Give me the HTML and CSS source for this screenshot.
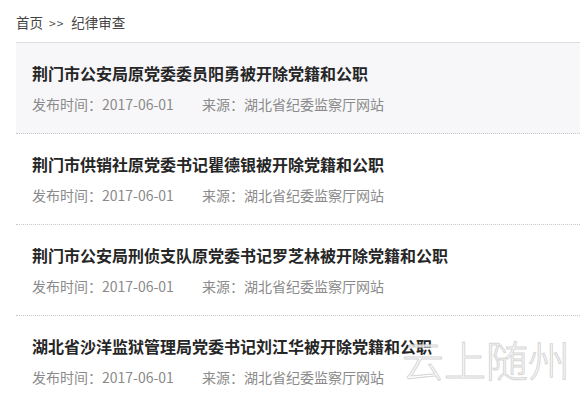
FILE: index.html
```html
<!DOCTYPE html>
<html lang="zh-CN">
<head>
<meta charset="utf-8">
<link rel="stylesheet" href="styles.css">
</head>
<body>
<div class="page">
  <div class="crumb">首页<span class="sep">&gt;&gt;</span>纪律审查</div>
  <ul class="list">
    <li class="item active">
      <div class="title">荆门市公安局原党委委员阳勇被开除党籍和公职</div>
      <div class="meta"><span class="date">发布时间：2017-06-01</span><span class="src">来源：湖北省纪委监察厅网站</span></div>
    </li>
    <li class="item">
      <div class="title">荆门市供销社原党委书记瞿德银被开除党籍和公职</div>
      <div class="meta"><span class="date">发布时间：2017-06-01</span><span class="src">来源：湖北省纪委监察厅网站</span></div>
    </li>
    <li class="item">
      <div class="title">荆门市公安局刑侦支队原党委书记罗芝林被开除党籍和公职</div>
      <div class="meta"><span class="date">发布时间：2017-06-01</span><span class="src">来源：湖北省纪委监察厅网站</span></div>
    </li>
    <li class="item">
      <div class="title">湖北省沙洋监狱管理局党委书记刘江华被开除党籍和公职</div>
      <div class="meta"><span class="date">发布时间：2017-06-01</span><span class="src">来源：湖北省纪委监察厅网站</span></div>
    </li>
  </ul>
  <div class="watermark">云上随州</div>
</div>
</body>
</html>
```
FILE: styles.css
```css
html, body {
  margin: 0;
  padding: 0;
  background: #fff;
}
body {
  font-family: "Noto Sans CJK SC", "Noto Sans", sans-serif;
  overflow: hidden;
}
.page {
  position: relative;
  padding: 0 8px 0 16px;
  height: 402px;
}
.crumb {
  font-size: 13.5px;
  line-height: 20px;
  color: #444;
  padding: 12px 0 9px;
  border-bottom: 1px solid #dedede;
}
.sep {
  margin: 0 7px 0 6px;
  font-size: 12px;
  letter-spacing: 1px;
  color: #555;
}
.list {
  list-style: none;
  margin: 0;
  padding: 0;
}
.item {
  padding: 20px 16px 19px;
  border-bottom: 1px dotted #c8c8c8;
}
.item.active {
  background: #f7f7f9;
}
.title {
  font-size: 16px;
  line-height: 20px;
  font-weight: bold;
  color: #262626;
  white-space: nowrap;
}
.meta {
  margin-top: 11px;
  font-size: 14px;
  line-height: 20px;
  color: #8a8a8a;
  display: flex;
  gap: 28px;
}
.watermark {
  position: absolute;
  left: 402px;
  top: 334px;
  font-size: 42px;
  line-height: 50px;
  font-weight: 300;
  color: rgba(255,255,255,0.7);
  -webkit-text-stroke: 1px #d6d6d6;
}
```
